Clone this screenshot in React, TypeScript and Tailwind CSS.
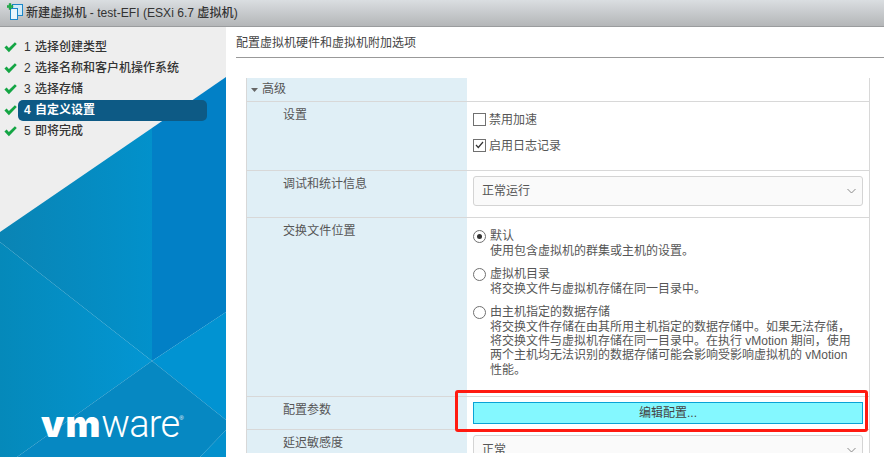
import React from "react";

const font = { fontFamily: '"Liberation Sans", "Noto Sans CJK SC", sans-serif' };

function Check() {
  return (
    <svg width="13" height="11" viewBox="0 0 13 11" className="shrink-0">
      <path d="M0.4 5.6 L2.6 3.6 L4.9 6 L10.9 0.2 L12.8 2 L4.9 10.2 Z" fill="#14a544" />
    </svg>
  );
}

function Step({ n, text, active }: { n: number; text: string; active?: boolean }) {
  return (
    <div className="flex h-[21px] items-center">
      <div className="flex w-[18px] justify-start pl-[4px]">
        <Check />
      </div>
      <div
        className={
          active
            ? "flex h-[21px] w-[189px] items-center rounded-[5px] bg-[#0d5a85] pl-[6px] text-[12px] font-bold text-white"
            : "flex h-[21px] w-[189px] items-center pl-[6px] text-[12px] font-medium text-[#333]"
        }
      >
        <span className="w-[11px]">{n}</span>
        <span>{text}</span>
      </div>
    </div>
  );
}

function Chevron() {
  return (
    <svg width="9" height="6" viewBox="0 0 9 6" className="ml-auto mr-[6px]">
      <path d="M0.5 1 L4.5 5 L8.5 1" fill="none" stroke="#8a8a8a" strokeWidth="1" />
    </svg>
  );
}

function Radio({ on }: { on?: boolean }) {
  return (
    <div className="mt-[1px] flex h-[13px] w-[13px] shrink-0 items-center justify-center rounded-full border border-[#707070] bg-white">
      {on && <div className="h-[5px] w-[5px] rounded-full bg-[#333]" />}
    </div>
  );
}

function Row({ label, h, children, indent = true }: { label: React.ReactNode; h: string; children?: React.ReactNode; indent?: boolean }) {
  return (
    <div className={`flex border-b border-[#d8d8d8] ${h}`}>
      <div className={`w-[220px] shrink-0 bg-[#e0eff6] ${indent ? "pl-[36px] pt-[6px]" : ""}`}>{label}</div>
      <div className="min-w-0 flex-1">{children}</div>
    </div>
  );
}

function Art() {
  return (
    <svg className="absolute inset-0" width="226" height="430" viewBox="0 27 226 430">
      <defs>
        <linearGradient id="g1" x1="0" x2="1" y1="0" y2="0">
          <stop offset="0" stopColor="#0a84b4" />
          <stop offset="1" stopColor="#0291cb" />
        </linearGradient>
        <linearGradient id="g2" x1="0" x2="1" y1="0" y2="0">
          <stop offset="0" stopColor="#0589ba" />
          <stop offset="1" stopColor="#0396d3" />
        </linearGradient>
      </defs>
      <polygon points="0,232 152,128 152,361 0,242" fill="url(#g1)" />
      <polygon points="152,128 226,77 226,312 152,361" fill="#0280c6" />
      <polygon points="0,242 152,361 17,457 0,457" fill="url(#g2)" />
      <polygon points="152,361 226,312 226,420" fill="#0193d2" />
      <polygon points="152,361 226,420 226,430 200,457 17,457" fill="#0688c2" />
      <polygon points="226,420 226,430 200,457 226,457" fill="#0390cc" />
    </svg>
  );
}

function TitleIcon() {
  return (
    <svg width="17" height="20" viewBox="6 3 17 20" className="shrink-0">
      <rect x="11.5" y="4.5" width="10" height="11" fill="#cfeaf8" stroke="#1b87c9" />
      <rect x="9.5" y="8.5" width="7" height="11" fill="#e6f5fc" stroke="#1b87c9" />
      <path d="M8 3.5 H10 V5.5 H12 V7.5 H10 V9.5 H8 V7.5 H6 V5.5 H8 Z" fill="#22b14c" stroke="#128a3a" strokeWidth="0.4" />
    </svg>
  );
}

export default function App() {
  return (
    <div className="flex h-[457px] w-[884px] flex-col overflow-hidden bg-white text-[12px] leading-[14.3px] text-[#565656]" style={font}>
      <div className="flex h-[27px] shrink-0 items-center border-b border-[#9a9c9e] bg-gradient-to-b from-[#dadee1] to-[#b4b6b8] pl-[7px]">
        <TitleIcon />
        <span className="ml-[2px] text-[12.1px] font-medium text-[#333]">新建虚拟机 - test-EFI (ESXi 6.7 虚拟机)</span>
      </div>
      <div className="flex min-h-0 flex-1">
        <div className="relative flex w-[226px] shrink-0 flex-col justify-between overflow-hidden bg-[#eeeeee]">
          <Art />
          <div className="relative pt-[10px]">
            <Step n={1} text="选择创建类型" />
            <Step n={2} text="选择名称和客户机操作系统" />
            <Step n={3} text="选择存储" />
            <Step n={4} text="自定义设置" active />
            <Step n={5} text="即将完成" />
          </div>
          <div className="relative flex items-baseline pb-[18px] pl-[41px] text-white">
            <span className="text-[37px] leading-[30px] font-black tracking-[1px]" style={{ fontFamily: "Inter, sans-serif" }}>vm</span>
            <span className="text-[38px] leading-[30px] font-light tracking-[-0.8px]" style={{ fontFamily: "Roboto, sans-serif" }}>ware</span>
            <span className="mt-[6px] self-start text-[6px] leading-[6px]">®</span>
          </div>
        </div>
        <div className="flex min-w-0 flex-1 flex-col">
          <div className="ml-[10px] flex h-[31px] shrink-0 items-center border-b border-[#999] pt-[3px] text-[#444]">配置虚拟机硬件和虚拟机附加选项</div>
          <div className="h-[395px] shrink-0 overflow-hidden pl-[20px] pr-[14px] pt-[20px]">
            <div className="relative h-full border-x border-[#d8d8d8]">
              <Row
                h="h-[24px]"
                indent={false}
                label={
                  <div className="flex h-full items-center pl-[4px]">
                    <svg width="7" height="4" viewBox="0 0 7 4"><path d="M0 0 H7 L3.5 4 Z" fill="#666" /></svg>
                    <span className="ml-[4px]">高级</span>
                  </div>
                }
              />
              <Row h="h-[69px]" label="设置">
                <div className="pl-[6px] pt-[10px]">
                  <div className="flex h-[14px] items-center">
                    <div className="h-[13px] w-[13px] border border-[#707070] bg-white" />
                    <span className="ml-[3px] mt-[3px]">禁用加速</span>
                  </div>
                  <div className="mt-[12px] flex h-[14px] items-center">
                    <div className="flex h-[13px] w-[13px] items-center justify-center border border-[#707070] bg-white">
                      <svg width="9" height="8" viewBox="0 0 9 8"><path d="M1 4 L3.3 6.5 L8 1" fill="none" stroke="#333" strokeWidth="1.2" /></svg>
                    </div>
                    <span className="ml-[3px] mt-[3px]">启用日志记录</span>
                  </div>
                </div>
              </Row>
              <Row h="h-[47px]" label="调试和统计信息">
                <div className="pl-[6px] pt-[5px]">
                  <div className="flex h-[30px] w-[390px] items-center rounded-[3px] border border-[#d4d4d4] bg-[#fafafa] pl-[8px]">
                    正常运行
                    <Chevron />
                  </div>
                </div>
              </Row>
              <Row h="h-[179px]" label={<span className="tracking-[0.1px]">交换文件位置</span>}>
                <div className="pl-[6px] pt-[11.4px]">
                  <div className="flex">
                    <Radio on />
                    <div className="ml-[4px]">默认<br />使用包含虚拟机的群集或主机的设置。</div>
                  </div>
                  <div className="mt-[9.4px] flex">
                    <Radio />
                    <div className="ml-[4px]">虚拟机目录<br />将交换文件与虚拟机存储在同一目录中。</div>
                  </div>
                  <div className="mt-[9.4px] flex">
                    <Radio />
                    <div className="ml-[4px]">
                      由主机指定的数据存储<br />
                      将交换文件存储在由其所用主机指定的数据存储中。如果无法存储，<br />
                      将交换文件与虚拟机存储在同一目录中。在执行 vMotion 期间，使用<br />
                      两个主机均无法识别的数据存储可能会影响受影响虚拟机的 vMotion<br />
                      性能。
                    </div>
                  </div>
                </div>
              </Row>
              <Row h="h-[33px]" label="配置参数">
                <div className="pl-[6px] pt-[5px]">
                  <div className="flex h-[22px] w-[390px] items-center justify-center border border-[#0aa3d6] bg-[#84f8ff] text-[#444]">编辑配置...</div>
                </div>
              </Row>
              <div className="flex h-[40px]">
                <div className="w-[220px] shrink-0 bg-[#e0eff6] pl-[36px] pt-[6px]">延迟敏感度</div>
                <div className="pl-[6px] pt-[5px]">
                  <div className="flex h-[30px] w-[390px] items-center rounded-[3px] border border-[#d4d4d4] bg-[#fafafa] pl-[8px]">
                    正常
                    <Chevron />
                  </div>
                </div>
              </div>
              <div className="pointer-events-none absolute left-[208px] top-[312px] h-[42px] w-[413px] rounded-[3px] border-[3px] border-[#ff1a10]" />
            </div>
          </div>
        </div>
      </div>
    </div>
  );
}
